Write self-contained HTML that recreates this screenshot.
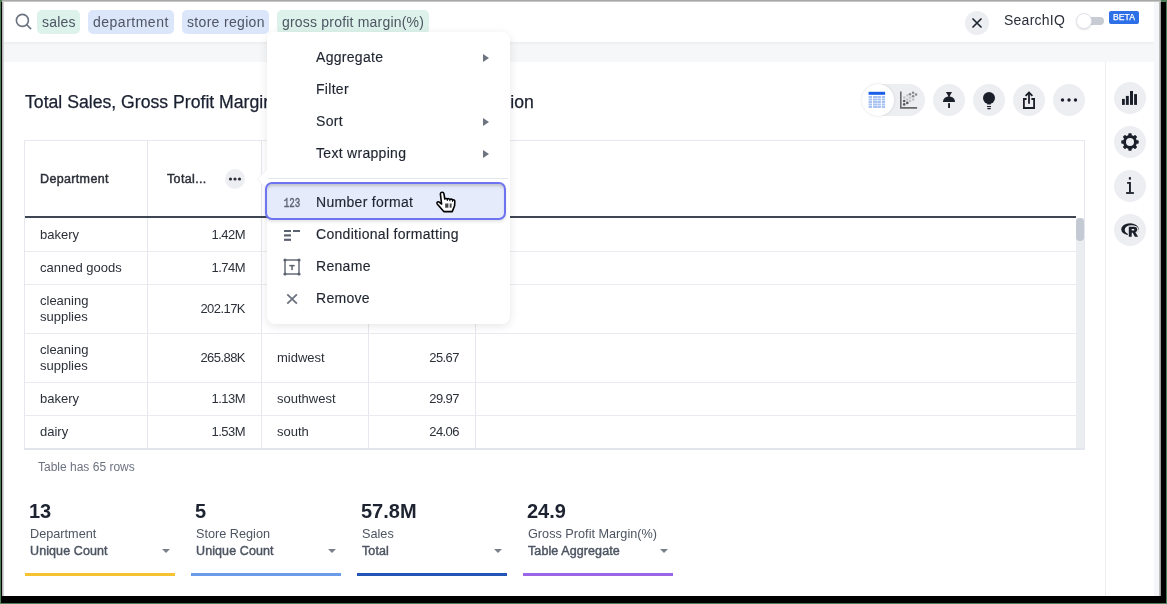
<!DOCTYPE html>
<html><head><meta charset="utf-8">
<style>
*{margin:0;padding:0;box-sizing:border-box}
html,body{width:1167px;height:604px;overflow:hidden;background:#4f7f56;font-family:"Liberation Sans",sans-serif;position:relative}
.a{position:absolute}
.cell,.mi,.title,.chip,.kv,.kl,.ka,.a{will-change:transform}
#frame{position:absolute;left:1px;top:2px;width:1165px;height:601px;background:#000}
#win{position:absolute;left:2px;top:0;width:1159px;height:596px;background:#fff;overflow:hidden}
.chip{position:absolute;top:10px;height:24px;border-radius:5px;font-size:14px;line-height:24px;color:#4f5563;padding:0 5px;white-space:nowrap;letter-spacing:0.45px}
.g{background:#dcf2ea}
.b{background:#dbe6fb}
.rbtn{position:absolute;left:1114px;width:32px;height:32px;border-radius:50%;background:#eceef2}
.tbtn{position:absolute;top:84px;width:32px;height:32px;border-radius:50%;background:#eceef2}
.title{position:absolute;left:25px;top:92px;font-size:17.65px;color:#1a2030;white-space:nowrap;-webkit-text-stroke:0.25px #1a2030}
.vl{position:absolute;top:141px;width:1px;height:307px;background:#e6e8ef}
.hl{position:absolute;left:25px;width:1051px;height:1px;background:#e9ebf0}
.cell{position:absolute;font-size:13px;color:#2c3039;white-space:nowrap;line-height:16px}
.hd{font-size:12.5px;color:#2c3039;letter-spacing:0.35px;-webkit-text-stroke:0.45px #2c3039}
.r{text-align:right;letter-spacing:-0.55px}
.mi{position:absolute;left:316px;font-size:14px;color:#1f2530;white-space:nowrap;letter-spacing:0.3px;-webkit-text-stroke:0.15px #1f2530}
.arr{position:absolute;left:483px;width:0;height:0;border-top:4.5px solid transparent;border-bottom:4.5px solid transparent;border-left:6px solid #6e7480}
.kv{position:absolute;font-size:20px;font-weight:bold;color:#1d2330}
.kl{position:absolute;font-size:12.7px;color:#4d5562;white-space:nowrap}
.ka{position:absolute;font-size:12.5px;color:#4d5562;white-space:nowrap;letter-spacing:0.1px;-webkit-text-stroke:0.45px #4d5562}
.kt{position:absolute;width:0;height:0;border-left:4px solid transparent;border-right:4px solid transparent;border-top:4.5px solid #7a808a}
.kb{position:absolute;width:150px;height:3px}
</style></head><body>
<div id="frame"></div>
<div id="win"></div>
<!-- right strip -->
<div class="a" style="left:1154px;top:2px;width:5px;height:594px;background:#f5f6f9"></div>
<div class="a" style="left:1159px;top:0;width:2px;height:596px;background:linear-gradient(90deg,#d0d0d0,#8a8a8a)"></div>
<!-- top/left edge -->
<div class="a" style="left:2px;top:0;width:1159px;height:2px;background:linear-gradient(#9a9a9a,#d4d4d4)"></div>
<div class="a" style="left:2px;top:2px;width:2px;height:594px;background:linear-gradient(90deg,#a6a6a6,#e2e2e2)"></div>

<!-- search bar -->
<svg class="a" style="left:14px;top:12px" width="19" height="19" viewBox="0 0 19 19"><circle cx="8.4" cy="8.4" r="6" fill="none" stroke="#6b7280" stroke-width="1.6"/><line x1="12.8" y1="12.8" x2="16.6" y2="16.6" stroke="#6b7280" stroke-width="1.6" stroke-linecap="round"/></svg>
<div class="chip g" style="left:37px;width:43px;letter-spacing:0.2px">sales</div>
<div class="chip b" style="left:88px;width:86px;letter-spacing:0.5px">department</div>
<div class="chip b" style="left:182px;width:87px;letter-spacing:0.32px">store region</div>
<div class="chip g" style="left:277px;width:152px;letter-spacing:0.2px">gross profit margin(%)</div>
<div class="a" style="left:965px;top:11px;width:24px;height:24px;border-radius:50%;background:#eceef2"></div>
<svg class="a" style="left:965px;top:11px" width="24" height="24" viewBox="0 0 24 24"><path d="M8 8L16 16M16 8L8 16" stroke="#1f2530" stroke-width="1.7" stroke-linecap="round"/></svg>
<div class="a" style="left:1004px;top:12px;font-size:14px;color:#2a2f3a;letter-spacing:0.25px">SearchIQ</div>
<div class="a" style="left:1082px;top:17px;width:22px;height:8px;border-radius:4px;background:#c6cbd4"></div>
<div class="a" style="left:1076px;top:13px;width:16px;height:16px;border-radius:50%;background:#fff;border:1px solid #dde1e8;box-shadow:0 1px 2px rgba(0,0,0,0.12)"></div>
<div class="a" style="left:1109px;top:11px;width:30px;height:13px;border-radius:2px;background:#2d6fe6;color:#fff;font-size:8.6px;line-height:13px;text-align:center;-webkit-text-stroke:0.25px #fff">BETA</div>

<!-- band -->
<div class="a" style="left:4px;top:42px;width:1150px;height:20px;background:#f6f7f9;box-shadow:inset 0 2px 3px -1px rgba(0,0,0,0.06)"></div>

<!-- right panel -->
<div class="a" style="left:1105px;top:62px;width:1px;height:534px;background:#eceef2"></div>
<div class="rbtn" style="top:82px"></div>
<div class="rbtn" style="top:126px"></div>
<div class="rbtn" style="top:170px"></div>
<div class="rbtn" style="top:214px"></div>
<svg class="a" style="left:1118px;top:86px" width="24" height="24" fill="#1b1f2a">
<rect x="4" y="12.9" width="2.8" height="6"/><rect x="7.9" y="9.9" width="2.9" height="9"/><rect x="12" y="5" width="3" height="13.9"/><rect x="16.1" y="8.1" width="2.9" height="10.8"/>
</svg>
<svg class="a" style="left:1118px;top:130px" width="24" height="24" viewBox="0 0 24 24">
<g fill="#1b1f2a" transform="translate(12,12)">
<circle r="6.9"/>
<rect x="-1.7" y="-8.7" width="3.4" height="4" rx="0.8"/>
<rect x="-1.7" y="-8.7" width="3.4" height="4" rx="0.8" transform="rotate(45)"/>
<rect x="-1.7" y="-8.7" width="3.4" height="4" rx="0.8" transform="rotate(90)"/>
<rect x="-1.7" y="-8.7" width="3.4" height="4" rx="0.8" transform="rotate(135)"/>
<rect x="-1.7" y="-8.7" width="3.4" height="4" rx="0.8" transform="rotate(180)"/>
<rect x="-1.7" y="-8.7" width="3.4" height="4" rx="0.8" transform="rotate(225)"/>
<rect x="-1.7" y="-8.7" width="3.4" height="4" rx="0.8" transform="rotate(270)"/>
<rect x="-1.7" y="-8.7" width="3.4" height="4" rx="0.8" transform="rotate(315)"/>
</g>
<circle cx="12" cy="12" r="4" fill="#eceef2"/>
</svg>
<svg class="a" style="left:1118px;top:174px" width="24" height="24" fill="#1b1f2a">
<rect x="10.9" y="3.2" width="2" height="2.4"/>
<path d="M9.1 8.1H12.9V18.2H11V9.8H9.1Z"/>
<rect x="8.1" y="18.1" width="7.8" height="1.8"/>
</svg>
<svg class="a" style="left:1118px;top:218px" width="24" height="24" viewBox="0 0 24 24">
<defs><clipPath id="rc"><path d="M0 0H24V14.6H9.8V24H0Z"/></clipPath></defs>
<path clip-path="url(#rc)" fill="#1b1f2a" fill-rule="evenodd" d="M3.2 11.3A8.8 6.1 0 1 0 20.8 11.3A8.8 6.1 0 1 0 3.2 11.3ZM6.7 11.9A6.9 4.7 0 1 0 20.5 11.9A6.9 4.7 0 1 0 6.7 11.9Z"/>
<path fill="#eceef2" stroke="#eceef2" stroke-width="1.4" d="M10.8 8.8H16C18.3 8.8 19.3 10.1 19.3 11.6C19.3 12.9 18.5 13.8 17.4 14.2L20.1 18.8H16.9L14.7 14.7H13.7V18.8H10.8ZM13.7 10.9V12.6H15.6C16.1 12.6 16.4 12.2 16.4 11.75C16.4 11.3 16.1 10.9 15.6 10.9Z"/><path fill="#1b1f2a" fill-rule="evenodd" d="M10.8 8.8H16C18.3 8.8 19.3 10.1 19.3 11.6C19.3 12.9 18.5 13.8 17.4 14.2L20.1 18.8H16.9L14.7 14.7H13.7V18.8H10.8ZM13.7 10.9V12.6H15.6C16.1 12.6 16.4 12.2 16.4 11.75C16.4 11.3 16.1 10.9 15.6 10.9Z"/>
</svg>

<div class="title">Total Sales, Gross Profit Margin(%) by Department, Store Region</div>

<!-- toolbar -->
<div class="a" style="left:862px;top:84px;width:63px;height:32px;border-radius:16px;background:#eceef2"></div>
<div class="a" style="left:862px;top:84px;width:32px;height:32px;border-radius:50%;background:#fff;box-shadow:0 0 3px rgba(0,0,0,0.12)"></div>
<div class="tbtn" style="left:933px"></div>
<div class="tbtn" style="left:973px"></div>
<div class="tbtn" style="left:1013px"></div>
<div class="tbtn" style="left:1053px"></div>
<!-- table icon -->
<svg class="a" style="left:864px;top:88px" width="26" height="24" viewBox="0 0 26 24">
<rect x="4.6" y="3.8" width="16.5" height="3" fill="#1b5fe9"/>
<g fill="#a8c1f3"><rect x="4.6" y="8" width="3.4" height="2"/><rect x="9" y="8" width="4" height="2"/><rect x="13.3" y="8" width="3.6" height="2"/><rect x="17.8" y="8" width="3.3" height="2"/><rect x="4.6" y="10.5" width="3.4" height="2"/><rect x="9" y="10.5" width="4" height="2"/><rect x="13.3" y="10.5" width="3.6" height="2"/><rect x="17.8" y="10.5" width="3.3" height="2"/><rect x="4.6" y="13" width="3.4" height="2"/><rect x="9" y="13" width="4" height="2"/><rect x="13.3" y="13" width="3.6" height="2"/><rect x="17.8" y="13" width="3.3" height="2"/><rect x="4.6" y="15.5" width="3.4" height="2"/><rect x="9" y="15.5" width="4" height="2"/><rect x="13.3" y="15.5" width="3.6" height="2"/><rect x="17.8" y="15.5" width="3.3" height="2"/><rect x="4.6" y="18" width="3.4" height="2"/><rect x="9" y="18" width="4" height="2"/><rect x="13.3" y="18" width="3.6" height="2"/><rect x="17.8" y="18" width="3.3" height="2"/></g></svg>
<!-- scatter icon -->
<svg class="a" style="left:896px;top:88px" width="26" height="24" viewBox="0 0 26 24">
<path d="M4.8 3.5V19.9H21.1" fill="none" stroke="#6a6a6a" stroke-width="1.6"/>
<g fill="#5a5a5a"><circle cx="8.2" cy="13" r="1.3"/><circle cx="11.3" cy="14.9" r="1.3"/><circle cx="8.2" cy="16.4" r="1.3"/></g>
<g fill="#8a8a8a"><circle cx="14" cy="6.2" r="1.3"/><circle cx="17.1" cy="4.7" r="1.3"/><circle cx="17.1" cy="8.2" r="1.3"/><circle cx="20" cy="6.5" r="1.3"/></g>
<g fill="#c2c2c4"><circle cx="8.3" cy="9.5" r="1.3"/><circle cx="11.3" cy="7.5" r="1.3"/><circle cx="14.1" cy="9.7" r="1.3"/><circle cx="11.3" cy="11.5" r="1.3"/><circle cx="14.1" cy="13" r="1.3"/><circle cx="17.2" cy="11.5" r="1.3"/></g>
</svg>
<!-- pin -->
<svg class="a" style="left:937px;top:88px" width="24" height="24" viewBox="0 0 24 24" fill="#1b1f2a">
<path d="M8.9 3.9H15L13 7.6V8.7H11V7.6Z"/>
<path d="M6 14C6 10.8 8.6 8.6 12 8.6C15.4 8.6 18 10.8 18 14Z"/>
<rect x="11.1" y="15.1" width="1.9" height="4.9" rx="0.6"/>
</svg>
<!-- bulb -->
<svg class="a" style="left:977px;top:88px" width="24" height="24" viewBox="0 0 24 24" fill="#1b1f2a">
<circle cx="12" cy="10" r="6"/>
<rect x="10.2" y="13.5" width="3.6" height="3"/>
<rect x="10" y="18" width="4" height="1.1"/>
<rect x="10.3" y="20.1" width="3.5" height="1.1" rx="0.5"/>
</svg>
<!-- share -->
<svg class="a" style="left:1017px;top:88px" width="24" height="24" viewBox="0 0 24 24" fill="none" stroke="#1b1f2a" stroke-width="1.8">
<path d="M9.6 11H6.9V20H17.1V11H14.4"/>
<path d="M12 15.7V4.6"/>
<path d="M8.6 7.9L12 4.5L15.4 7.9"/>
</svg>
<!-- more -->
<svg class="a" style="left:1053px;top:84px" width="32" height="32" fill="#1b1f2a"><circle cx="9.5" cy="16" r="1.7"/><circle cx="16" cy="16" r="1.7"/><circle cx="22.5" cy="16" r="1.7"/></svg>

<!-- table -->
<div class="a" style="left:24px;top:140px;width:1061px;height:310px;border:1px solid #e6e8ef;border-bottom:2px solid #e3e5ec"></div>
<div class="vl" style="left:147px"></div>
<div class="vl" style="left:261px"></div>
<div class="vl" style="left:368px"></div>
<div class="vl" style="left:475px"></div>
<div class="a" style="left:25px;top:216px;width:1051px;height:2px;background:#3f4553"></div>
<div class="hl" style="top:251px"></div>
<div class="hl" style="top:284px"></div>
<div class="hl" style="top:333px"></div>
<div class="hl" style="top:382px"></div>
<div class="hl" style="top:415px"></div>
<div class="a" style="left:1076px;top:218px;width:8px;height:230px;background:#ebedf1"></div>
<div class="a" style="left:1076px;top:218px;width:8px;height:23px;border-radius:4px;background:#c3cad3"></div>

<div class="cell hd" style="left:40px;top:171px">Department</div>
<div class="cell hd" style="left:167px;top:171px">Total...</div>
<div class="a" style="left:225px;top:169px;width:20px;height:20px;border-radius:50%;background:#eceef2"></div>
<svg class="a" style="left:225px;top:169px" width="20" height="20"><circle cx="5.5" cy="10" r="1.6" fill="#2c3039"/><circle cx="10" cy="10" r="1.6" fill="#2c3039"/><circle cx="14.5" cy="10" r="1.6" fill="#2c3039"/></svg>

<div class="cell" style="left:40px;top:227px">bakery</div>
<div class="cell r" style="left:147px;width:98px;top:227px">1.42M</div>
<div class="cell" style="left:40px;top:260px">canned goods</div>
<div class="cell r" style="left:147px;width:98px;top:260px">1.74M</div>
<div class="cell" style="left:40px;top:293px">cleaning<br>supplies</div>
<div class="cell r" style="left:147px;width:98px;top:301px">202.17K</div>
<div class="cell" style="left:40px;top:342px">cleaning<br>supplies</div>
<div class="cell r" style="left:147px;width:98px;top:350px">265.88K</div>
<div class="cell" style="left:277px;top:350px">midwest</div>
<div class="cell r" style="left:370px;width:89px;top:350px">25.67</div>
<div class="cell" style="left:40px;top:391px">bakery</div>
<div class="cell r" style="left:147px;width:98px;top:391px">1.13M</div>
<div class="cell" style="left:277px;top:391px">southwest</div>
<div class="cell r" style="left:370px;width:89px;top:391px">29.97</div>
<div class="cell" style="left:40px;top:424px">dairy</div>
<div class="cell r" style="left:147px;width:98px;top:424px">1.53M</div>
<div class="cell" style="left:277px;top:424px">south</div>
<div class="cell r" style="left:370px;width:89px;top:424px">24.06</div>

<div class="a" style="left:38px;top:460px;font-size:12px;color:#6b7280">Table has 65 rows</div>

<!-- KPIs -->
<div class="kv" style="left:29px;top:500px">13</div>
<div class="kl" style="left:30px;top:527px">Department</div>
<div class="ka" style="left:30px;top:544px">Unique Count</div>
<div class="kt" style="left:162px;top:549px"></div>
<div class="kb" style="left:25px;top:573px;background:#f7c232"></div>

<div class="kv" style="left:195px;top:500px">5</div>
<div class="kl" style="left:196px;top:527px">Store Region</div>
<div class="ka" style="left:196px;top:544px">Unique Count</div>
<div class="kt" style="left:328px;top:549px"></div>
<div class="kb" style="left:191px;top:573px;background:#6a9ce9"></div>

<div class="kv" style="left:361px;top:500px">57.8M</div>
<div class="kl" style="left:362px;top:527px">Sales</div>
<div class="ka" style="left:362px;top:544px">Total</div>
<div class="kt" style="left:494px;top:549px"></div>
<div class="kb" style="left:357px;top:573px;background:#2355b6"></div>

<div class="kv" style="left:527px;top:500px">24.9</div>
<div class="kl" style="left:528px;top:527px">Gross Profit Margin(%)</div>
<div class="ka" style="left:528px;top:544px">Table Aggregate</div>
<div class="kt" style="left:660px;top:549px"></div>
<div class="kb" style="left:523px;top:573px;background:#9a65e6"></div>

<!-- menu -->
<div class="a" style="left:267px;top:32px;width:243px;height:292px;background:#fff;border-radius:8px;box-shadow:0 2px 10px rgba(0,0,0,0.10)"></div>
<svg class="a" style="left:255px;top:166px" width="14" height="26"><path d="M12.5 2.5L2.3 13.2L12.5 23.5" fill="#fff" stroke="#eef0f3" stroke-width="1"/><rect x="12" y="0" width="2" height="26" fill="#fff"/></svg>
<div class="mi" style="top:49px">Aggregate</div><div class="arr" style="top:54px"></div>
<div class="mi" style="top:81px">Filter</div>
<div class="mi" style="top:113px">Sort</div><div class="arr" style="top:118px"></div>
<div class="mi" style="top:145px">Text wrapping</div><div class="arr" style="top:150px"></div>
<div class="a" style="left:268px;top:178px;width:240px;height:1px;background:#e3e6ec"></div>
<div class="a" style="left:265px;top:182px;width:241px;height:38px;border:2px solid #6e73f2;border-radius:7px;background:#e5ebfb;box-shadow:inset 0 3px 3px -1px rgba(60,50,30,0.22),0 2px 3px rgba(0,0,0,0.10)"></div>
<svg class="a" style="left:283px;top:196px" width="18" height="13"><text x="0.8" y="10.6" font-family="Liberation Mono" font-size="13.4" fill="#5c6370" stroke="#5c6370" stroke-width="0.5" textLength="16.5" lengthAdjust="spacingAndGlyphs">123</text></svg>
<svg class="a" style="left:283px;top:228px" width="18" height="14" fill="#5c6370"><rect x="1" y="2" width="7" height="2"/><rect x="10" y="2" width="7" height="2"/><rect x="1" y="6.3" width="7" height="2.2"/><rect x="1" y="10.7" width="7" height="2.2"/></svg>
<svg class="a" style="left:283px;top:258px" width="18" height="18" fill="none" stroke="#5c6370"><rect x="2" y="2" width="14" height="14" stroke-width="1.4"/><g fill="#5c6370" stroke="none"><circle cx="2" cy="2" r="1.6"/><circle cx="16" cy="2" r="1.6"/><circle cx="2" cy="16" r="1.6"/><circle cx="16" cy="16" r="1.6"/><rect x="6.3" y="6.9" width="5.4" height="1.5"/><rect x="8.3" y="6.9" width="1.5" height="5.2"/></g></svg>
<svg class="a" style="left:283px;top:290px" width="18" height="18"><path d="M4.3 4.3L13.9 13.6M13.9 4.3L4.3 13.6" stroke="#6b7280" stroke-width="1.8"/></svg>
<div class="mi" style="top:194px">Number format</div>
<div class="mi" style="top:226px">Conditional formatting</div>
<div class="mi" style="top:258px">Rename</div>
<div class="mi" style="top:290px">Remove</div>
<svg class="a" style="left:434px;top:188px" width="24" height="28" viewBox="0 0 24 28">
<path d="M8.2 4.2C9.2 4.2 9.8 4.9 9.95 5.9L10.8 11C11.5 10.2 12.9 10.3 13.3 11.2C13.9 10.4 15.5 10.5 15.9 11.5C16.6 10.8 18.2 11 18.5 12C19.4 11.6 20.8 12.1 20.8 13.3L20.6 17.8L18.2 23.6H9.8L3.2 15.9C2.4 14.8 3.4 13.2 4.9 13.9L7.6 16L6.4 6.1C6.3 5 7.1 4.2 8.2 4.2Z" fill="#fff" stroke="#000" stroke-width="1.6" stroke-linejoin="round"/>
<path d="M13.3 11.3V13M15.9 11.6V13.3M18.5 12.1V13.8" stroke="#000" stroke-width="1"/>
<rect x="11.2" y="15.5" width="3.2" height="4.2" fill="#444"/><rect x="15.7" y="15.5" width="1.9" height="4.2" fill="#444"/>
</svg>
</body></html>
